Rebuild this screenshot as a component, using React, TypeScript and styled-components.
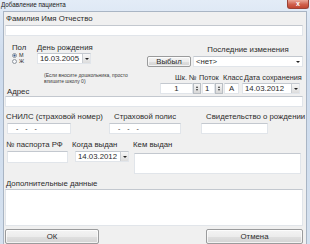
import React from "react";
import styled, { createGlobalStyle } from "styled-components";

const Global = createGlobalStyle`
  html, body { margin: 0; padding: 0; background: #ffffff; }
  body { font-family: "Liberation Sans", Arial, sans-serif; color: #2c2c2c; }
  * { box-sizing: border-box; }
`;

const Window = styled.div`
  width: 310px;
  height: 244px;
  display: flex;
  flex-direction: column;
  background: linear-gradient(#e3ecf7, #cddbed 60px, #d5e1ef);
  overflow: hidden;
`;

const TitleBar = styled.div`
  height: 12px;
  display: flex;
  align-items: flex-start;
  justify-content: space-between;
  padding-left: 1px;
`;

const Title = styled.span`
  font-size: 6.3px;
  line-height: 10px;
  color: #1a1a1a;
`;

const CloseBtn = styled.div`
  width: 22px;
  height: 9px;
  margin-right: 1px;
  border-radius: 0 0 3px 3px;
  background: linear-gradient(#eaa899, #d0604c 55%, #c24530);
  border: 1px solid #9a4236;
  border-top: none;
  color: #fff;
  font-size: 7px;
  line-height: 8px;
  text-align: center;
  font-weight: bold;
`;

const Content = styled.div`
  flex: 1;
  margin: 0 3px 0 3px;
  background: #f0f0f0;
  border: 1px solid #a9b5c4;
  border-bottom: none;
  display: flex;
  flex-direction: column;
`;

const Row = styled.div<{ $h?: number; $mt?: number }>`
  display: flex;
  align-items: flex-start;
  height: ${(p) => (p.$h ? `${p.$h}px` : "auto")};
  margin-top: ${(p) => p.$mt ?? 0}px;
`;

const Col = styled.div<{ $w?: number; $ml?: number; $mt?: number; $align?: string }>`
  display: flex;
  flex-direction: column;
  align-items: ${(p) => p.$align ?? "flex-start"};
  width: ${(p) => (p.$w ? `${p.$w}px` : "auto")};
  margin-left: ${(p) => p.$ml ?? 0}px;
  margin-top: ${(p) => p.$mt ?? 0}px;
  flex-shrink: 0;
`;

const Label = styled.div<{ $ml?: number; $mt?: number; $w?: number; $small?: boolean }>`
  font-size: ${(p) => (p.$small ? 7.3 : 7.8)}px;
  line-height: 9px;
  white-space: nowrap;
  margin-left: ${(p) => p.$ml ?? 0}px;
  margin-top: ${(p) => p.$mt ?? 0}px;
  width: ${(p) => (p.$w ? `${p.$w}px` : "auto")};
  flex-shrink: 0;
`;

const Note = styled.div`
  font-size: 5px;
  line-height: 5.6px;
  margin-left: 40px;
  margin-top: 3px;
  color: #3a3a3a;
`;

const Field = styled.div<{ $w: number; $h?: number; $ml?: number; $mt?: number; $align?: string }>`
  width: ${(p) => p.$w}px;
  height: ${(p) => p.$h ?? 11}px;
  margin-left: ${(p) => p.$ml ?? 0}px;
  margin-top: ${(p) => p.$mt ?? 0}px;
  background: #ffffff;
  border: 1px solid #e1e5ea;
  border-top-color: #c3c8cf;
  font-size: 7.8px;
  line-height: 9px;
  padding: 0 2px;
  text-align: ${(p) => p.$align ?? "left"};
  white-space: nowrap;
  flex-shrink: 0;
`;

const Mask = styled.span`
  font-size: 7px;
  letter-spacing: 2.5px;
  padding-left: 6px;
  color: #333;
`;

const Combo = styled.div<{ $w: number; $ml?: number; $mt?: number }>`
  width: ${(p) => p.$w}px;
  height: 11px;
  margin-left: ${(p) => p.$ml ?? 0}px;
  margin-top: ${(p) => p.$mt ?? 0}px;
  display: flex;
  align-items: stretch;
  background: #fff;
  border: 1px solid #e1e5ea;
  border-top-color: #c3c8cf;
  font-size: 7.8px;
  line-height: 9px;
  flex-shrink: 0;
`;

const ComboText = styled.div`
  flex: 1;
  padding-left: 2px;
`;

const DropBtn = styled.div<{ $flat?: boolean }>`
  width: 8px;
  display: flex;
  align-items: center;
  justify-content: center;
  background: ${(p) => (p.$flat ? "#fff" : "linear-gradient(#f7f7f7, #dcdcdc)")};
  border-left: ${(p) => (p.$flat ? "none" : "1px solid #c9cdd2")};
`;

const Arrow = styled.div`
  width: 0;
  height: 0;
  border-left: 2px solid transparent;
  border-right: 2px solid transparent;
  border-top: 2px solid #222;
`;

const SpinBtn = styled.div`
  width: 8px;
  height: 11px;
  background: linear-gradient(#f6f6f6, #d8d8d8);
  border: 1px solid #b9bec4;
  display: flex;
  flex-direction: column;
  align-items: center;
  justify-content: center;
  gap: 1px;
  flex-shrink: 0;
`;

const UpTri = styled.div`
  width: 0;
  height: 0;
  border-left: 1.5px solid transparent;
  border-right: 1.5px solid transparent;
  border-bottom: 2px solid #333;
`;

const DownTri = styled.div`
  width: 0;
  height: 0;
  border-left: 1.5px solid transparent;
  border-right: 1.5px solid transparent;
  border-top: 2px solid #333;
`;

const Button = styled.div<{ $w: number; $ml?: number; $mt?: number; $h?: number }>`
  width: ${(p) => p.$w}px;
  height: ${(p) => p.$h ?? 11}px;
  margin-left: ${(p) => p.$ml ?? 0}px;
  margin-top: ${(p) => p.$mt ?? 0}px;
  border: 1px solid #9a9b9c;
  border-radius: 2px;
  background: linear-gradient(#f4f4f4, #ececec 50%, #e0e0e0 51%, #d3d3d3);
  box-shadow: inset 0 0 0 1px rgba(255, 255, 255, 0.7);
  font-size: 7.8px;
  display: flex;
  align-items: center;
  justify-content: center;
  flex-shrink: 0;
`;

const RadioRow = styled.div`
  display: flex;
  align-items: center;
  height: 6px;
  gap: 2px;
  font-size: 5.5px;
  line-height: 6px;
`;

const Radio = styled.div<{ $on?: boolean }>`
  width: 5px;
  height: 5px;
  border-radius: 50%;
  border: 1px solid #8f969e;
  background: ${(p) => (p.$on ? "radial-gradient(#3a5a8a 40%, #e8eef5 55%)" : "#f5f7fa")};
`;

const App: React.FC = () => (
  <>
    <Global />
    <Window>
      <TitleBar>
        <Title>Добавление пациента</Title>
        <CloseBtn>x</CloseBtn>
      </TitleBar>
      <Content>
        <Label $ml={2} $mt={2}>Фамилия Имя Отчество</Label>
        <Field $w={298} $ml={1} $mt={2} />

        <Row $h={34}>
          <Col $w={25} $ml={8} $mt={7}>
            <Label>Пол</Label>
            <RadioRow>
              <Radio $on />
              <span>М</span>
            </RadioRow>
            <RadioRow>
              <Radio />
              <span>Ж</span>
            </RadioRow>
          </Col>
          <Col $w={56} $mt={7}>
            <Label>День рождения</Label>
            <Combo $w={54} $mt={1}>
              <ComboText>16.03.2005</ComboText>
              <DropBtn>
                <Arrow />
              </DropBtn>
            </Combo>
          </Col>
          <Button $w={44} $ml={54} $mt={20}>Выбыл</Button>
          <Col $w={110} $ml={2} $mt={9} $align="center">
            <Label>Последние изменения</Label>
            <Combo $w={110} $mt={2}>
              <ComboText>&lt;нет&gt;</ComboText>
              <DropBtn $flat>
                <Arrow />
              </DropBtn>
            </Combo>
          </Col>
        </Row>

        <Row $h={25}>
          <Col $w={156}>
            <Note>
              (Если вносите дошкольника, просто
              <br />
              впишите школу 0)
            </Note>
            <Label $ml={3} $mt={3}>Адрес</Label>
          </Col>
          <Col>
            <Row $mt={3}>
              <Label $small $ml={15} $w={24}>Шк. №</Label>
              <Label $small $w={24}>Поток</Label>
              <Label $small $w={21}>Класс</Label>
              <Label $small $w={62}>Дата сохранения</Label>
            </Row>
            <Row $mt={1}>
              <Field $w={33} $align="center">1</Field>
              <SpinBtn>
                <UpTri />
                <DownTri />
              </SpinBtn>
              <Field $w={13} $ml={1}>1</Field>
              <SpinBtn>
                <UpTri />
                <DownTri />
              </SpinBtn>
              <Field $w={15} $ml={1} $align="center">А</Field>
              <Combo $w={58} $ml={3}>
                <ComboText>14.03.2012</ComboText>
                <DropBtn>
                  <Arrow />
                </DropBtn>
              </Combo>
            </Row>
          </Col>
        </Row>

        <Field $w={298} $ml={1} $mt={1} />

        <Row $mt={5}>
          <Label $ml={2} $w={108}>СНИЛС (страховой номер)</Label>
          <Label $w={92}>Страховой полис</Label>
          <Label>Свидетельство о рождении</Label>
        </Row>
        <Row $mt={2}>
          <Field $w={64} $ml={3}><Mask>- - -</Mask></Field>
          <Field $w={72} $ml={38}><Mask>- - -</Mask></Field>
          <Field $w={67} $ml={20} />
        </Row>

        <Row $mt={6}>
          <Label $ml={2} $w={66}>№ паспорта РФ</Label>
          <Label $w={61}>Когда выдан</Label>
          <Label>Кем выдан</Label>
        </Row>
        <Row $mt={2} $h={24}>
          <Field $w={61} $h={12} $ml={3} />
          <Combo $w={54} $ml={7}>
            <ComboText>14.03.2012</ComboText>
            <DropBtn>
              <Arrow />
            </DropBtn>
          </Combo>
          <Field $w={167} $h={21} $ml={5} $mt={2} />
        </Row>

        <Label $ml={2} $mt={4}>Дополнительные данные</Label>
        <Field $w={298} $h={37} $ml={1} $mt={1} />

        <Row $mt={3}>
          <Button $w={94} $h={15} $ml={1}>ОК</Button>
          <Button $w={97} $h={15} $ml={107}>Отмена</Button>
        </Row>
      </Content>
    </Window>
  </>
);

export default App;
